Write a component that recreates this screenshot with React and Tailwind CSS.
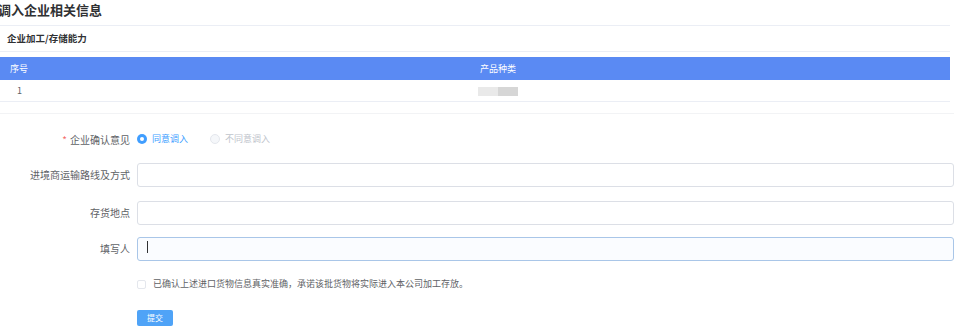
import React, { useState } from "react";

const font = { fontFamily: '"Noto Sans CJK SC", "Noto Sans", sans-serif' };

const FormRow = ({ label, required, children, className = "" }) => (
  <div className={`flex items-center ${className}`}>
    <div className="w-[137px] shrink-0 pr-[7px] text-right text-[10px] text-[#606266]">
      {required && <span className="mr-[3px] text-[#f56c6c]">*</span>}
      {label}
    </div>
    <div className="flex-1">{children}</div>
  </div>
);

const App = () => {
  const [agree, setAgree] = useState("yes");
  const [route, setRoute] = useState("");
  const [place, setPlace] = useState("");
  const [person, setPerson] = useState("");
  const [checked, setChecked] = useState(false);

  return (
    <div style={font} className="w-[956px] h-[335px] overflow-hidden bg-white text-[#303133]">
      <div className="h-[25px] pt-[1px] -ml-[2px] text-[13px] font-bold leading-[17px] text-[#303133]">
        调入企业相关信息
      </div>

      <div className="w-[950px] border-t border-[#ebeef5]">
        <div className="h-[26px] flex items-center pl-[7px] text-[9.5px] font-bold text-[#303133] border-b border-[#ebeef5]">
          企业加工/存储能力
        </div>
        <div className="mt-[5px]">
          <div className="h-[23px] flex items-center bg-[#5a8af3] text-white text-[9px]">
            <div className="w-[40px] pl-[10px]">序号</div>
            <div className="flex-1 text-center pl-[6px]">产品种类</div>
          </div>
          <div className="h-[22px] flex items-center border-b border-[#ebeef5] text-[9px] text-[#606266]">
            <div className="w-[40px] pl-[17px]">1</div>
            <div className="flex-1 flex justify-center pl-[6px]">
              <div className="flex h-[9px] mt-[1px]">
                <span className="w-[20px] bg-[#e9e9e9]" />
                <span className="w-[20px] bg-[#d6d6d6]" />
              </div>
            </div>
          </div>
        </div>
      </div>

      <div className="mt-[11px] border-t border-[#f2f3f5] pt-[13px] w-[954px]">
        <FormRow label="企业确认意见" required className="h-[24px]">
          <div className="flex items-center text-[9px]">
            <label className="flex items-center cursor-pointer" onClick={() => setAgree("yes")}>
              <span className="w-[10px] h-[10px] rounded-full bg-[#409eff] flex items-center justify-center">
                <span className="w-[4px] h-[4px] rounded-full bg-white" />
              </span>
              <span className="ml-[5px] text-[#409eff]">同意调入</span>
            </label>
            <label className="flex items-center ml-[22px] cursor-not-allowed">
              <span className="w-[10px] h-[10px] rounded-full border border-[#e4e7ed] bg-[#f5f7fa]" />
              <span className="ml-[5px] text-[#c0c4cc]">不同意调入</span>
            </label>
          </div>
        </FormRow>

        <FormRow label="进境商运输路线及方式" className="mt-[10px]">
          <input
            value={route}
            onChange={(e) => setRoute(e.target.value)}
            className="w-full h-[24px] border border-[#dcdfe6] rounded-[3px] px-[8px] text-[11px] focus:outline-none"
          />
        </FormRow>

        <FormRow label="存货地点" className="mt-[12px]">
          <input
            value={place}
            onChange={(e) => setPlace(e.target.value)}
            className="w-full h-[24px] border border-[#dcdfe6] rounded-[3px] px-[8px] text-[11px] focus:outline-none"
          />
        </FormRow>

        <FormRow label="填写人" className="mt-[10px]">
          <div className="relative">
            <input
              value={person}
              onChange={(e) => setPerson(e.target.value)}
              className="w-full h-[24px] border border-[#a9c6e8] rounded-[3px] bg-[#fafcff] px-[8px] text-[11px] focus:outline-none"
            />
            {!person && (
              <span className="absolute left-[10px] top-[6px] w-[1px] h-[12px] bg-[#303133]" />
            )}
          </div>
        </FormRow>

        <div className="flex items-center ml-[137px] mt-[18px] h-[10px]">
          <span
            onClick={() => setChecked(!checked)}
            className={`w-[9px] h-[9px] border rounded-[2px] cursor-pointer ${
              checked ? "bg-[#409eff] border-[#409eff]" : "border-[#e4e7ed] bg-white"
            }`}
          />
          <span className="ml-[7px] text-[9px] text-[#606266]">
            已确认上述进口货物信息真实准确，承诺该批货物将实际进入本公司加工存放。
          </span>
        </div>

        <div className="ml-[137px] mt-[21px]">
          <button className="block w-[36px] h-[16px] rounded-[2px] bg-[#4fa3f7] text-white text-[8px] leading-[16px]">
            提交
          </button>
        </div>
      </div>
    </div>
  );
};

export default App;
